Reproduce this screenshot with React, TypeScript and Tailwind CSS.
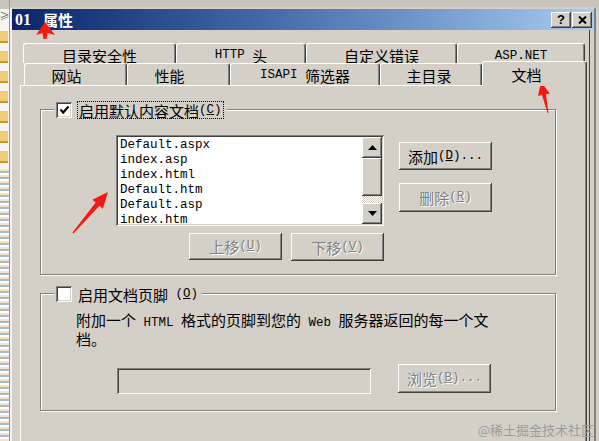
import React from 'react';

const raised =
  'bg-[#d4d0c8] shadow-[inset_-1px_-1px_#404040,inset_1px_1px_#ffffff,inset_-2px_-2px_#808080,inset_2px_2px_#d4d0c8]';
const sunken =
  'shadow-[inset_1px_1px_#808080,inset_-1px_-1px_#ffffff,inset_2px_2px_#404040,inset_-2px_-2px_#d4d0c8]';
const etched = 'border border-[#808080] shadow-[inset_1px_1px_#ffffff,1px_1px_#ffffff]';
const grayText = 'text-[#808080] [text-shadow:1px_1px_0_#ffffff]';

const Mono: React.FC<{ children: React.ReactNode }> = ({ children }) => (
  <span className="font-['Liberation_Mono',monospace] text-[12.5px] whitespace-pre">{children}</span>
);

const Button: React.FC<{ children: React.ReactNode; disabled?: boolean; className?: string }> = ({
  children,
  disabled,
  className = '',
}) => (
  <div className={`${raised} flex items-center justify-center w-[93px] ${disabled ? grayText : ''} ${className}`}>
    {children}
  </div>
);

const Check: React.FC<{ checked?: boolean }> = ({ checked }) => (
  <div className={`w-[16px] h-[16px] bg-white ${sunken} flex items-center justify-center`}>
    {checked && (
      <svg width="11" height="10" viewBox="0 0 11 10">
        <path d="M1.5 4.5 L4.2 7.5 L9.5 1.5" stroke="#000" strokeWidth="2.2" fill="none" />
      </svg>
    )}
  </div>
);

const Tab: React.FC<{ children: React.ReactNode; w: string; className?: string }> = ({ children, w, className = '' }) => (
  <div
    className={`${w} bg-[#d4d0c8] border-t border-l border-white border-r border-r-[#404040] shadow-[inset_-1px_0_#808080] rounded-t-[3px] flex justify-center ${className}`}
  >
    {children}
  </div>
);

const files = ['Default.aspx', 'index.asp', 'index.html', 'Default.htm', 'Default.asp', 'index.htm'];

const LeftStrip = () => (
  <div className="w-[10px] flex flex-col bg-[#f6f4f0] border-r border-[#9c9890]">
    <div className="h-[9px] bg-[#c9c5bd]" />
    <div className="h-[14px] flex items-center justify-center text-[10px] leading-[10px] text-[#606060]">≥</div>
    {[0, 1, 2, 3, 4, 5, 6].map((i) => (
      <div key={i} className="mt-[8px] h-[12px] w-[8px] bg-[#f0cd78] border-b-2 border-[#c8962c]" />
    ))}
    <div className="mt-[6px] flex-1 bg-[repeating-linear-gradient(180deg,#f3e3c3_0px,#f3e3c3_2px,#a7bad4_2px,#a7bad4_4px,#ffffff_4px,#ffffff_6px)]" />
  </div>
);

const Arrows = () => (
  <svg className="absolute inset-0 pointer-events-none" width="599" height="441" viewBox="0 0 599 441">
    <polygon points="45,22 55,35 47.5,33 46.5,39 43.5,39 42.5,33 36,35" fill="#f41a12" />
    <polygon
      points="541,82 549.8,93.4 545.9,94.3 548.5,113 547.5,113.1 542,95.1 538,96"
      fill="#f41a12"
    />
    <polygon
      points="108,192 102.9,208.7 99.5,205.8 73.5,233.5 72.5,232.5 95.7,202.6 92.3,199.7"
      fill="#f41a12"
    />
  </svg>
);

export default function App() {
  return (
    <div className="relative w-[599px] h-[441px] overflow-hidden flex bg-[#d4d0c8] font-['Noto_Sans_CJK_SC',sans-serif] text-[15px] leading-[15px] text-black">
      <LeftStrip />
      <div className="flex flex-col flex-1">
        <div className="h-[7px] bg-[#c9c5bd]" />
        <div className="flex-1 flex flex-col w-[586px] border-l-[2px] border-l-[#f2f0ec] border-t-2 border-t-[#d4d0c8] border-r-2 border-r-[#808080]">
          {/* title bar */}
          <div className="h-[21px] flex items-center justify-between pl-[3px] pr-[2px] bg-linear-to-r from-[#0a246a] via-[#4f74b0] to-[#a9ccf2]">
            <div className="flex items-center text-white font-bold">
              <span className="font-['Liberation_Serif',serif] text-[16px]">01</span>
              <span className="ml-[12px] text-[15px]">属性</span>
            </div>
            <div className="flex gap-[1px]">
              <div className={`${raised} w-[20px] h-[16px] flex items-center justify-center font-['Liberation_Sans',sans-serif] font-bold text-[13px]`}>
                ?
              </div>
              <div className={`${raised} w-[20px] h-[16px] flex items-center justify-center`}>
                <svg width="9" height="8" viewBox="0 0 9 8">
                  <path d="M1 0.5 L8 7.5 M8 0.5 L1 7.5" stroke="#000" strokeWidth="2" />
                </svg>
              </div>
            </div>
          </div>

          {/* body */}
          <div className="flex-1 flex">
            <div className="w-[578px] flex flex-col pl-[8px] pt-[13px] border-r border-[#404040]">
              <div className="flex ml-[3px] h-[20px]">
                <Tab w="w-[153px]" className="pt-[4px]">目录安全性</Tab>
                <Tab w="w-[130px]" className="pt-[4px]">
                  <Mono>HTTP </Mono>头
                </Tab>
                <Tab w="w-[151px]" className="pt-[4px]">自定义错误</Tab>
                <Tab w="w-[128px]" className="pt-[5px]">
                  <Mono>ASP.NET</Mono>
                </Tab>
              </div>
              <div className="flex items-end ml-[4px] h-[22px]">
                <Tab w="w-[103px]" className="h-[22px] pt-[4px] pr-[18px]">网站</Tab>
                <Tab w="w-[103px]" className="h-[22px] pt-[4px] pr-[18px]">性能</Tab>
                <Tab w="w-[150px]" className="h-[22px] pt-[4px]">
                  <Mono>ISAPI </Mono>筛选器
                </Tab>
                <Tab w="w-[102px]" className="h-[22px] pt-[4px] pr-[4px]">主目录</Tab>
                <Tab w="w-[105px]" className="h-[25px] -mb-[1px] pt-[5px] pr-[16px] relative z-10">
                  文档
                </Tab>
              </div>

              {/* panel */}
              <div className="w-[567px] flex-1 border-l border-t border-white border-r border-r-[#404040] shadow-[inset_-1px_0_#808080]">
                {/* group 1 */}
                <div className={`relative ml-[19px] mt-[23px] w-[516px] ${etched} pt-[25px] pb-[13px]`}>
                  <div className="absolute left-[13px] -top-[9px] flex items-center gap-[5px] bg-[#d4d0c8] pl-[2px] pr-[3px]">
                    <Check checked />
                    <div className="border border-dotted border-black px-[1px] h-[18px] flex items-center">
                      启用默认内容文档
                      <Mono>
                        (<u>C</u>)
                      </Mono>
                    </div>
                  </div>
                  <div className="flex ml-[75px]">
                    <div className="w-[268px] flex flex-col">
                      <div className={`h-[91px] bg-white p-[2px] flex ${sunken}`}>
                        <div className="flex-1 pl-[2px] pt-[1px] overflow-hidden">
                          {files.map((f) => (
                            <div key={f} className="font-['Liberation_Mono',monospace] text-[12.5px] leading-[15px]">
                              {f}
                            </div>
                          ))}
                        </div>
                        <div className="w-[20px] flex flex-col">
                          <div className={`${raised} h-[21px] flex items-center justify-center`}>
                            <svg width="9" height="5" viewBox="0 0 9 5">
                              <path d="M4.5 0 L9 5 L0 5Z" fill="#000" />
                            </svg>
                          </div>
                          <div className={`${raised} h-[38px]`} />
                          <div className="flex-1 bg-[repeating-conic-gradient(#ffffff_0_25%,#d4d0c8_0_50%)] bg-[length:2px_2px]" />
                          <div className={`${raised} h-[21px] flex items-center justify-center`}>
                            <svg width="9" height="5" viewBox="0 0 9 5">
                              <path d="M0 0 L9 0 L4.5 5Z" fill="#000" />
                            </svg>
                          </div>
                        </div>
                      </div>
                      <div className="flex justify-end gap-[9px] mt-[7px]">
                        <Button disabled className="h-[27px]">
                          上移
                          <Mono>
                            (<u>U</u>)
                          </Mono>
                        </Button>
                        <Button disabled className="h-[28px]">
                          下移
                          <Mono>
                            (<u>V</u>)
                          </Mono>
                        </Button>
                      </div>
                    </div>
                    <div className="flex flex-col ml-[15px] pt-[7px] gap-[13px]">
                      <Button className="h-[28px]">
                        添加
                        <Mono>
                          (<u>D</u>)...
                        </Mono>
                      </Button>
                      <Button disabled className="h-[29px]">
                        删除
                        <Mono>
                          (<u>R</u>)
                        </Mono>
                      </Button>
                    </div>
                  </div>
                </div>

                {/* group 2 */}
                <div className={`relative ml-[19px] mt-[18px] w-[516px] ${etched} pt-[18px] pb-[16px]`}>
                  <div className="absolute left-[13px] -top-[8px] flex items-center gap-[6px] bg-[#d4d0c8] pl-[2px] pr-[4px]">
                    <Check />
                    <div className="h-[16px] flex items-center">
                      启用文档页脚
                      <Mono>
                        {' '}(<u>O</u>)
                      </Mono>
                    </div>
                  </div>
                  <div className="ml-[35px] leading-[16px]">
                    <div>
                      附加一个<Mono> HTML </Mono>格式的页脚到您的<Mono> Web </Mono>服务器返回的每一个文
                    </div>
                    <div>档。</div>
                  </div>
                  <div className="flex items-start ml-[76px] mt-[17px]">
                    <div className={`w-[254px] h-[26px] mt-[4px] bg-[#d4d0c8] ${sunken}`} />
                    <Button disabled className="h-[29px] ml-[27px]">
                      浏览
                      <Mono>
                        (<u>B</u>)...
                      </Mono>
                    </Button>
                  </div>
                </div>
              </div>
            </div>
          </div>
        </div>
      </div>

      <div className="absolute right-[5px] bottom-[4px] text-[13px] leading-[15px] text-[#9c9c9c]">@稀土掘金技术社区</div>
      <Arrows />
    </div>
  );
}
